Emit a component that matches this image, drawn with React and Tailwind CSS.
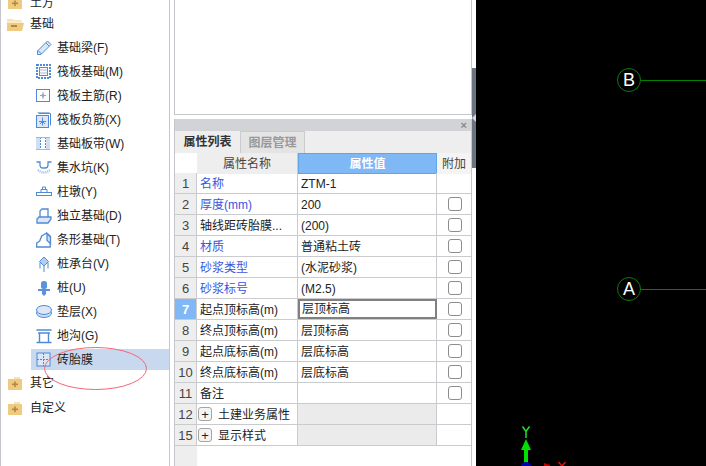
import React from 'react';

const CJK = "font-['Liberation_Sans','Noto_Sans_CJK_SC',sans-serif]";

function FolderOpen() {
  return (
    <svg width="17" height="13" viewBox="0 0 17 13" className="mt-[2px] shrink-0">
      <path d="M0 1h6l1 1h7v3H0z" fill="#f5e2b5" />
      <path d="M0 3h15v2H0z" fill="#f7ebcd" />
      <path d="M0 5h17l-2 8H0z" fill="#eecb80" />
      <rect x="4" y="7" width="6" height="2" fill="#b08a3e" />
    </svg>
  );
}

function FolderClosed() {
  return (
    <svg width="14" height="13" viewBox="0 0 14 13" className="mt-[2px] shrink-0">
      <path d="M6 0h6v2H6z" fill="#f5e2b5" />
      <rect x="0" y="2" width="14" height="11" fill="#eecb80" />
      <rect x="4" y="6.5" width="6" height="1.6" fill="#b08a3e" />
      <rect x="6.2" y="4.5" width="1.6" height="5.6" fill="#b08a3e" />
    </svg>
  );
}

const stroke = { fill: 'none', stroke: '#4f8ad6', strokeWidth: 1 };

const icons = {
  beam: <g {...stroke}><path d="M1.5 14.5v-3.5L11.5 1l3.5 3.5-10 10z" fill="#dbe7f6" /><path d="M2 10.5l3.5 3.5M10 3l3 3" /></g>,
  raft: <g {...stroke}><rect x="1" y="1" width="13" height="13" strokeWidth="2" strokeDasharray="2 1" /><rect x="3.5" y="3.5" width="8" height="8" /><path d="M3.5 6h8M3.5 9h8" stroke="#9db9dd" /></g>,
  main: <g {...stroke}><rect x="0.5" y="1.5" width="13" height="12" /><path d="M7 4v7M4 7.5h6" stroke="#9aa5b3" /><circle cx="7" cy="7.5" r="1.2" stroke="#9aa5b3" /></g>,
  neg: <g {...stroke}><path d="M2.5 1.5h12v12" /><path d="M1.5 0.5h12" stroke="#9db9dd" /><rect x="0.5" y="3.5" width="12" height="12" fill="#dbe7f6" /><path d="M6.5 5.5v8M3 9.5h7M4 12l2-2M9 12l-2-2" /></g>,
  strip: <g {...stroke}><rect x="0" y="1" width="14" height="13" fill="#cfe0f5" stroke="none" /><rect x="4" y="2" width="6" height="11" fill="#fff" stroke="none" /><path d="M4.5 1v13M9.5 1v13" strokeDasharray="2 1" /><path d="M0 1.5h14M0 13.5h14" stroke="#9db9dd" /></g>,
  pit: <g {...stroke}><path d="M0.5 2h3.5v3q0 3 3 3h2q3 0 3-3V2h3.5" strokeWidth="1.3" /><path d="M2 10q6 5 12 0" stroke="#9db9dd" strokeDasharray="1 1" strokeWidth="2.5" /></g>,
  pier: <g {...stroke}><rect x="0.5" y="8.5" width="15" height="3" /><path d="M5 8.5V5.5h6v3M6.5 5.5V3h3v2.5" /></g>,
  iso: <g {...stroke} strokeWidth="1.3"><path d="M4 9V3l2-2h6v8" /><path d="M1 15v-4l2-2h12v2l-3 4z" fill="#dbe7f6" /></g>,
  strip2: <g {...stroke} strokeWidth="1.3"><path d="M0.7 15v-4l3-2 2-5 5-3 3.5 3v11z" /><path d="M11 1.5v7l3.5 3V5z" fill="#cfe0f5" /></g>,
  cap: <g {...stroke}><path d="M8 1l4.5 4.5L8 10 3.5 5.5z" fill="#b4cfee" /><path d="M4 6.5v6M8 10v6M12 6.5v6" /></g>,
  pile: <g fill="#5b93da"><rect x="5" y="1" width="6" height="8" rx="2.5" /><rect x="2" y="9" width="12" height="2" /><path d="M6 11h4v3l-2 2-2-2z" /></g>,
  cushion: <g {...stroke}><ellipse cx="8" cy="9" rx="7.5" ry="4.5" fill="#cfe0f5" /><ellipse cx="8" cy="6" rx="7.5" ry="4.5" fill="#dbe7f6" /></g>,
  trench: <g {...stroke} strokeWidth="1.4"><path d="M0.5 2h15M2 5h12M0.5 14.5h15" /><path d="M3.5 5v9.5M12.5 5v9.5" /></g>,
  brick: <g {...stroke}><rect x="1" y="1" width="13" height="13" fill="#dbe7f6" /><path d="M7.5 1v13M1 7.5h13" strokeDasharray="2 1" /></g>,
};

const treeItems = [
  ['beam', '基础梁(F)'],
  ['raft', '筏板基础(M)'],
  ['main', '筏板主筋(R)'],
  ['neg', '筏板负筋(X)'],
  ['strip', '基础板带(W)'],
  ['pit', '集水坑(K)'],
  ['pier', '柱墩(Y)'],
  ['iso', '独立基础(D)'],
  ['strip2', '条形基础(T)'],
  ['cap', '桩承台(V)'],
  ['pile', '桩(U)'],
  ['cushion', '垫层(X)'],
  ['trench', '地沟(G)'],
  ['brick', '砖胎膜'],
];

function TreeItem({ icon, label }) {
  const selected = label === '砖胎膜';
  return (
    <div className="flex h-[24px] items-center pl-[30px]">
      <div className={`flex h-[21px] flex-1 items-center pl-[5px] ${selected ? 'bg-[#c8d8ef]' : ''}`}>
        <svg width="16" height="16" viewBox="0 0 16 16" className="mt-[2px] shrink-0">{icons[icon]}</svg>
        <span className="ml-[5px] mt-[2px] text-[12px] text-[#222]">{label}</span>
      </div>
    </div>
  );
}

function TreePanel() {
  return (
    <div className="relative h-full w-[170px] shrink-0 overflow-hidden border-x border-[#c4c6cb] bg-white">
      <div className="mt-[-7px] flex h-[17px] items-center pl-[7px]">
        <FolderClosed />
        <span className="ml-[8px] mt-[2px] text-[12px] text-[#222]">土方</span>
      </div>
      <div className="mt-px flex h-[24px] items-center pl-[6px]">
        <FolderOpen />
        <span className="ml-[6px] mt-[2px] text-[12px] text-[#222]">基础</span>
      </div>
      <div>
        {treeItems.map(([icon, label]) => (
          <TreeItem key={label} icon={icon} label={label} />
        ))}
      </div>
      <div className="flex h-[22px] items-center pl-[7px]">
        <FolderClosed />
        <span className="ml-[8px] mt-[2px] text-[12px] text-[#222]">其它</span>
      </div>
      <div className="mt-[2px] flex h-[24px] items-center pl-[7px]">
        <FolderClosed />
        <span className="ml-[8px] mt-[2px] text-[12px] text-[#222]">自定义</span>
      </div>
      {/* hand drawn mark over the selected row */}
      <svg width="106" height="44" viewBox="0 0 106 44" className="absolute left-[42px] top-[347px]">
        <ellipse cx="52.5" cy="21.5" rx="51" ry="21" fill="none" stroke="#ee6a75" strokeWidth="1" />
      </svg>
    </div>
  );
}

const blue = 'text-[#3a55e0]';

const rows = [
  { n: '1', name: '名称', value: 'ZTM-1', link: true, noCheck: true },
  { n: '2', name: '厚度(mm)', value: '200', link: true },
  { n: '3', name: '轴线距砖胎膜...', value: '(200)' },
  { n: '4', name: '材质', value: '普通粘土砖', link: true },
  { n: '5', name: '砂浆类型', value: '(水泥砂浆)', link: true },
  { n: '6', name: '砂浆标号', value: '(M2.5)', link: true },
  { n: '7', name: '起点顶标高(m)', value: '层顶标高', active: true },
  { n: '8', name: '终点顶标高(m)', value: '层顶标高' },
  { n: '9', name: '起点底标高(m)', value: '层底标高' },
  { n: '10', name: '终点底标高(m)', value: '层底标高' },
  { n: '11', name: '备注', value: '' },
];

const groups = [
  { n: '12', name: '土建业务属性' },
  { n: '15', name: '显示样式' },
];

const gridCols = 'grid grid-cols-[22px_101px_139px_34px] grid-rows-[20px]';

function PropRow({ row }) {
  return (
    <div className={`${gridCols} h-[21px] border-b border-[#c9cbcf] text-[12px]`}>
      <div className={`flex items-center justify-center border-r border-[#c9cbcf] pt-px text-[13px] leading-none ${row.active ? 'bg-[#7fb8f5] font-bold text-white' : 'bg-[#eeeeee] text-[#444]'}`}>
        {row.n}
      </div>
      <div className={`flex items-center overflow-hidden whitespace-nowrap border-r border-[#c9cbcf] pl-[3px] pt-px ${row.link ? blue : 'text-[#222]'}`}>
        {row.name}
      </div>
      <div className={`flex items-center text-[#222] ${row.active ? 'border-2 border-[#808080] pl-[2px]' : 'border-r border-[#c9cbcf] pl-[3px] pt-px'}`}>
        {row.value}
      </div>
      <div className="flex items-center justify-center pl-px">
        {!row.noCheck && <span className="h-[14px] w-[14px] rounded-[3px] border border-[#8d8d8d] bg-white" />}
      </div>
    </div>
  );
}

function GroupRow({ row }) {
  return (
    <div className={`${gridCols} h-[21px] border-b border-[#c9cbcf] text-[12px]`}>
      <div className="flex items-center justify-center border-r border-[#c9cbcf] bg-[#eeeeee] pt-px text-[13px] leading-none text-[#444]">{row.n}</div>
      <div className="flex items-center border-r border-[#c9cbcf] pl-px text-[#222]">
        <span className="flex h-[14px] w-[14px] items-center justify-center rounded-[3px] border border-[#a5a5a5] bg-[#f4f4f4] text-[13px] leading-none">+</span>
        <span className="ml-[6px] pt-px">{row.name}</span>
      </div>
      <div className="border-r border-[#c9cbcf] bg-[#ebebeb]" />
      <div />
    </div>
  );
}

function PropertyPanel() {
  return (
    <div className="flex h-full w-[298px] shrink-0 flex-col bg-white">
      <div className="h-[115px] border-x border-b border-[#c4c6cb] bg-white" />
      <div className="mt-[4px] flex min-h-0 flex-1 flex-col overflow-hidden border-x border-[#c4c6cb] bg-white">
        <div className="flex h-[12px] items-center justify-end bg-[#d2d3d7] pr-[4px]">
          <span className="text-[11px] font-bold leading-none text-[#888]">×</span>
        </div>
        <div className="flex h-[22px] bg-[#eeeeee] text-[12px]">
          <div className="flex w-[65px] items-center justify-center bg-[#eeeeee] font-bold text-[#333]">属性列表</div>
          <div className="flex w-[65px] items-center justify-center border-x border-t border-[#c9cbcf] bg-[#e4e4e4] font-bold text-[#999]">图层管理</div>
        </div>
        <div className="grid h-[20px] grid-cols-[22px_101px_139px_34px] border-b border-[#c9cbcf] text-[12px]">
          <div className="bg-white" />
          <div className="flex items-center justify-center border-r border-[#c9cbcf] bg-[#eeeeee] pt-px text-[#444]">属性名称</div>
          <div className="flex items-center justify-center border border-[#62a4ea] bg-[#7fb8f5] pt-px font-bold text-white">属性值</div>
          <div className="flex items-center justify-center bg-[#f4f4f4] pt-px text-[#444]">附加</div>
        </div>
        {rows.map((row) => (
          <PropRow key={row.n} row={row} />
        ))}
        {groups.map((row) => (
          <GroupRow key={row.n} row={row} />
        ))}
        <div className="flex-1 border-l-[22px] border-[#eeeeee]" />
      </div>
    </div>
  );
}

function AxisBubble({ label, top }) {
  return (
    <div className={`absolute left-[141px] flex items-center ${top}`}>
      <span className="flex h-[24px] w-[24px] items-center justify-center rounded-full border border-[#0a7d0a] text-[18px] leading-none text-white">
        {label}
      </span>
      <span className="h-px w-[65px] bg-[#008000]" />
    </div>
  );
}

function Canvas() {
  return (
    <div className="relative h-full flex-1 overflow-hidden bg-black">
      <AxisBubble label="B" top="top-[68px]" />
      <AxisBubble label="A" top="top-[277px]" />
      {/* coordinate axes in the corner */}
      <svg width="80" height="66" viewBox="0 0 80 66" className="absolute left-[24px] top-[400px]">
        <path d="M22.5 26.5l3.5 5 3.5-5M26 31v7" fill="none" stroke="#22e022" strokeWidth="1.5" />
        <path d="M26 39l5 11h-3v13h-4V50h-3z" fill="#00e000" />
        <path d="M21 66a5 4 0 0 1 10 0z" fill="#0000b0" />
        <path d="M44 63l6 2v1h-6z" fill="#c00000" />
        <path d="M58.5 62l3.5 4 3.5-4" fill="none" stroke="#e01010" strokeWidth="1.5" />
      </svg>
    </div>
  );
}

export default function App() {
  return (
    <div className={`flex h-[466px] w-[706px] overflow-hidden bg-white ${CJK}`}>
      <TreePanel />
      <div className="w-[4px] shrink-0 bg-white" />
      <PropertyPanel />
      <div className="relative w-[4px] shrink-0 bg-white">
        <div className="absolute left-0 top-[68px] h-[100px] w-full bg-[#6b7480]" />
        <svg width="4" height="8" viewBox="0 0 4 8" className="absolute left-0 top-[114px]">
          <path d="M4 0v8L0 4z" fill="#d6d8dc" />
        </svg>
      </div>
      <Canvas />
    </div>
  );
}
